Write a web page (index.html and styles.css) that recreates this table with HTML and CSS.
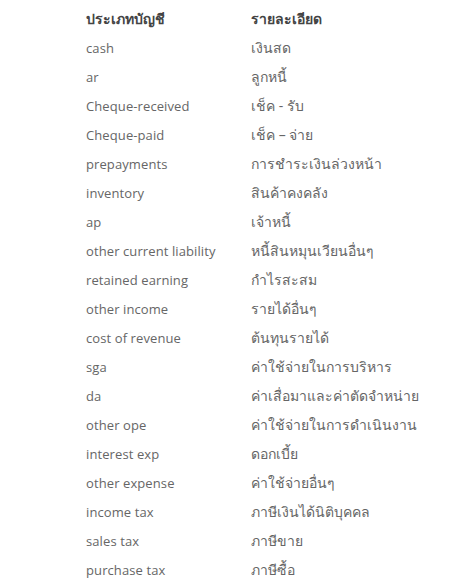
FILE: index.html
```html
<!DOCTYPE html>
<html lang="th">
<head>
<meta charset="utf-8">
<link rel="stylesheet" href="styles.css">
</head>
<body>
<div class="table">
  <div class="th th-thai">ประเภทบัญชี</div><div class="th th-thai">รายละเอียด</div>
  <div class="td">cash</div><div class="td thai">เงินสด</div>
  <div class="td">ar</div><div class="td thai">ลูกหนี้</div>
  <div class="td">Cheque-received</div><div class="td thai">เช็ค - รับ</div>
  <div class="td">Cheque-paid</div><div class="td thai">เช็ค – จ่าย</div>
  <div class="td">prepayments</div><div class="td thai">การชำระเงินล่วงหน้า</div>
  <div class="td">inventory</div><div class="td thai">สินค้าคงคลัง</div>
  <div class="td">ap</div><div class="td thai">เจ้าหนี้</div>
  <div class="td">other current liability</div><div class="td thai">หนี้สินหมุนเวียนอื่นๆ</div>
  <div class="td">retained earning</div><div class="td thai">กำไรสะสม</div>
  <div class="td">other income</div><div class="td thai">รายได้อื่นๆ</div>
  <div class="td">cost of revenue</div><div class="td thai">ต้นทุนรายได้</div>
  <div class="td">sga</div><div class="td thai">ค่าใช้จ่ายในการบริหาร</div>
  <div class="td">da</div><div class="td thai">ค่าเสื่อมาและค่าตัดจำหน่าย</div>
  <div class="td">other ope</div><div class="td thai">ค่าใช้จ่ายในการดำเนินงาน</div>
  <div class="td">interest exp</div><div class="td thai">ดอกเบี้ย</div>
  <div class="td">other expense</div><div class="td thai">ค่าใช้จ่ายอื่นๆ</div>
  <div class="td">income tax</div><div class="td thai">ภาษีเงินได้นิติบุคคล</div>
  <div class="td">sales tax</div><div class="td thai">ภาษีขาย</div>
  <div class="td">purchase tax</div><div class="td thai">ภาษีซื้อ</div>
</div>
</body>
</html>
```
FILE: styles.css
```css
html, body {
  margin: 0;
  padding: 0;
  background: #ffffff;
}
body {
  font-family: "Open Sans", "Noto Sans", sans-serif;
  font-size: 13px;
  color: #666666;
}
.table {
  display: grid;
  grid-template-columns: 165px auto;
  grid-auto-rows: 29px;
  margin: 4px 0 0 86px;
}
.th, .td {
  display: flex;
  align-items: center;
  white-space: nowrap;
  letter-spacing: 0.1px;
}
.thai, .th-thai {
  font-size: 14px;
  letter-spacing: 0;
}
.th {
  font-weight: 700;
  color: #444444;
}
```
